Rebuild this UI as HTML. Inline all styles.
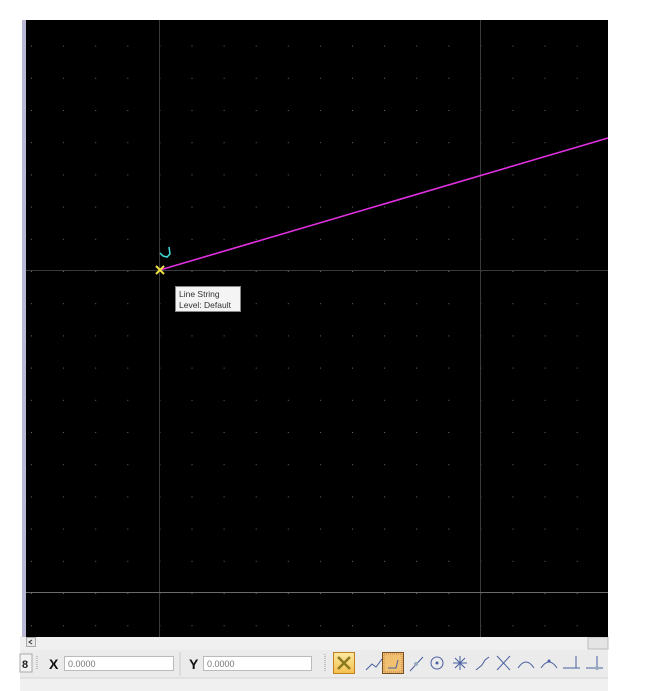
<!DOCTYPE html>
<html><head><meta charset="utf-8"><style>
html,body{margin:0;padding:0;background:#fff;width:646px;height:691px;overflow:hidden}
svg{display:block}
text{font-family:"Liberation Sans",sans-serif}
</style></head><body>
<svg width="646" height="691" viewBox="0 0 646 691" xmlns="http://www.w3.org/2000/svg">
<defs>
<pattern id="dots" x="31" y="45.6" width="32.1" height="32.2" patternUnits="userSpaceOnUse">
<rect x="0" y="0" width="1" height="1" fill="#6a6a6a"/>
</pattern>
<linearGradient id="yel" x1="0" y1="0" x2="0" y2="1"><stop offset="0" stop-color="#fde9a0"/><stop offset="1" stop-color="#f5c050"/></linearGradient>
</defs>
<!-- lower grey area -->
<rect x="20" y="636" width="588" height="55" fill="#f0f0f0"/>
<rect x="20" y="650" width="588" height="28" fill="#ebebeb"/>
<line x1="20" y1="678" x2="608" y2="678" stroke="#d6d6d6"/>
<rect x="588" y="637" width="20" height="12" fill="#e4e4e4" stroke="#bdbdbd"/>
<!-- canvas -->
<rect x="22" y="20" width="4" height="617" fill="#b9b9d6"/>
<rect x="26" y="20" width="582" height="617" fill="#000"/>
<rect x="26" y="20" width="582" height="617" fill="url(#dots)"/>
<line x1="159.5" y1="20" x2="159.5" y2="637" stroke="#3a3a3a"/>
<line x1="480.5" y1="20" x2="480.5" y2="637" stroke="#3a3a3a"/>
<line x1="26" y1="270.5" x2="608" y2="270.5" stroke="#3a3a3a"/>
<line x1="26" y1="592.5" x2="608" y2="592.5" stroke="#6a6a6a"/>
<line x1="160" y1="270" x2="608" y2="138" stroke="#e030e0" stroke-width="1.6"/>
<!-- cursor -->
<path d="M156 266 L164 274 M164 266 L156 274" stroke="#f0e040" stroke-width="2"/>
<path d="M169 247 L170 254 L167 257 L163 256 L160 253" stroke="#40e0e0" stroke-width="1.5" fill="none"/>
<!-- tooltip -->
<rect x="175.5" y="286.5" width="65" height="25" fill="#f4f4f4" stroke="#888"/>
<text x="179" y="297" font-size="8.5" fill="#333">Line String</text>
<text x="179" y="308" font-size="8.5" fill="#333">Level: Default</text>
<!-- scroll left btn -->
<rect x="26.5" y="637.5" width="9" height="9" fill="#e8e8e8" stroke="#aaa"/>
<path d="M32 640 L29 642 L32 644" stroke="#333" fill="none"/>
<!-- toolbar -->
<rect x="20" y="654" width="12" height="18" fill="#f2f2f2" stroke="#aaa"/>
<text x="22" y="668" font-size="11" fill="#222" font-weight="bold">8</text>
<line x1="37" y1="656" x2="37" y2="670" stroke="#999" stroke-dasharray="1 1"/>
<text x="49" y="669" font-size="14" font-weight="bold" fill="#111">X</text>
<rect x="64.5" y="656.5" width="109" height="14" fill="#fff" stroke="#bbb"/>
<text x="68" y="667" font-size="9" fill="#777">0.0000</text>
<line x1="180" y1="652" x2="180" y2="676" stroke="#ccc"/>
<text x="189" y="669" font-size="14" font-weight="bold" fill="#111">Y</text>
<rect x="203.5" y="656.5" width="108" height="14" fill="#fff" stroke="#bbb"/>
<text x="207" y="667" font-size="9" fill="#777">0.0000</text>
<line x1="325" y1="654" x2="325" y2="672" stroke="#999" stroke-dasharray="1 1"/>
<rect x="333.5" y="652.5" width="21" height="21" fill="url(#yel)" stroke="#c08020"/>
<path d="M338 657 L350 669 M350 657 L338 669" stroke="#8a7a20" stroke-width="2.5"/>
<path d="M366 670 L372 664 L376 667 L382 659" stroke="#4a60a0" fill="none"/>
<rect x="382.5" y="652.5" width="21" height="21" fill="#f0c070" stroke="#7a5020"/>
<rect x="384" y="654" width="18" height="18" fill="none" stroke="#c08040" stroke-dasharray="1 1"/>
<path d="M388 668 L396 668 L398 660" stroke="#4a60a0" fill="none"/>
<path d="M410 671 L423 657" stroke="#4a60a0"/><circle cx="416" cy="664" r="2" fill="#9ab"/>
<circle cx="437" cy="663" r="6" fill="none" stroke="#4a60a0"/><circle cx="437" cy="663" r="1.5" fill="#4a60a0"/>
<path d="M453 663 L467 663 M460 656 L460 670 M455 658 L465 668 M465 658 L455 668" stroke="#4a60a0"/>
<path d="M476 670 L482 665 L485 660 L489 657" stroke="#4a60a0" fill="none"/>
<path d="M497 656 L510 670 M510 656 L497 670" stroke="#4a60a0"/>
<path d="M518 668 Q526 656 534 668" stroke="#4a60a0" fill="none"/>
<path d="M541 668 Q549 656 557 668" stroke="#4a60a0" fill="none"/><circle cx="549" cy="661" r="1.5" fill="#4a60a0"/>
<path d="M563 668 L580 668 M576 668 L576 656" stroke="#4a60a0"/>
<path d="M586 668 L603 668 M597 668 L597 656" stroke="#4a60a0"/><circle cx="597" cy="668" r="2" fill="#9ab"/>
</svg>
</body></html>
